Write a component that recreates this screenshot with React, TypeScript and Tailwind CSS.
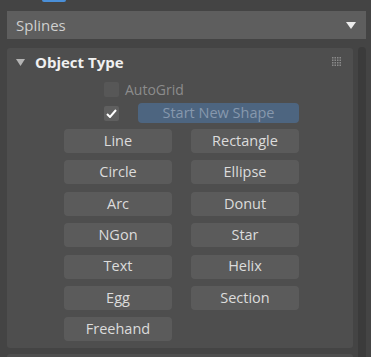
const SHAPES: string[] = [
  'Line',
  'Rectangle',
  'Circle',
  'Ellipse',
  'Arc',
  'Donut',
  'NGon',
  'Star',
  'Text',
  'Helix',
  'Egg',
  'Section',
  'Freehand',
];

function GripIcon() {
  const cells = [0, 1, 2, 3];
  return (
    <svg width="10" height="10" viewBox="0 0 10 10">
      {cells.map((r) =>
        cells.map((c) => (
          <rect key={`${r}-${c}`} x={c * 2.5} y={r * 2.5} width="1.5" height="1.5" fill="#8a8a8a" />
        )),
      )}
    </svg>
  );
}

function ShapeButton({ label }: { label: string }) {
  return (
    <button
      type="button"
      className="h-[24px] w-[108px] rounded-[4px] bg-[#5b5b5b] text-[14.5px] leading-none text-[#dcdcdc]"
    >
      {label}
    </button>
  );
}

export default function App() {
  return (
    <div
      className="h-[357px] w-[371px] overflow-hidden bg-[#444444]"
      style={{ fontFamily: '"Open Sans", "Noto Sans", sans-serif' }}
    >
      {/* cut-off tab above the list */}
      <div className="h-[11px]">
        <div className="ml-[42px] h-[2px] w-[24px] rounded-b-[2px] bg-[#4a8fd8]" />
      </div>

      {/* category dropdown */}
      <div className="ml-[7px] flex h-[28px] w-[359px] items-center justify-between bg-[#5e5e5e] pl-[9px] pr-[10px]">
        <span className="text-[15px] text-[#cfcfcf]">Splines</span>
        <svg width="10" height="7" viewBox="0 0 10 7">
          <path d="M0 0 H10 L5 7 Z" fill="#ececec" />
        </svg>
      </div>

      <div className="mt-[9px] flex h-[310px]">
        <div className="flex flex-col">
          {/* Object Type rollout */}
          <div className="ml-[7px] h-[301px] w-[346px] rounded-[3px] bg-[#4e4e4e]">
            <div className="flex h-[28px] items-center pl-[9px] pr-[11px]">
              <svg width="9" height="7" viewBox="0 0 9 7">
                <path d="M0 0 H9 L4.5 7 Z" fill="#b4b4b4" />
              </svg>
              <span className="ml-[10px] text-[15px] font-bold text-[#f0f0f0]">Object Type</span>
              <div className="ml-auto">
                <GripIcon />
              </div>
            </div>

            <div className="ml-[97px] mt-[6px] flex h-[15px] items-center">
              <div className="h-[15px] w-[15px] rounded-[2px] bg-[#575757]" />
              <span className="ml-[6px] text-[14px] leading-none text-[#8c8c8c]">AutoGrid</span>
            </div>

            <div className="ml-[97px] mt-[6px] flex h-[20px] items-center">
              <div className="flex h-[15px] w-[15px] items-center justify-center rounded-[2px] bg-[#5f5f5f]">
                <svg width="11" height="9" viewBox="0 0 11 9">
                  <path d="M1 5 L4 8 L10 1" fill="none" stroke="#ffffff" strokeWidth="2" />
                </svg>
              </div>
              <div className="ml-[19px] flex h-[20px] w-[161px] items-center justify-center rounded-[4px] bg-[#4d6580] text-[14.5px] leading-none text-[#8798ad]">
                Start New Shape
              </div>
            </div>

            <div className="ml-[57px] mt-[6px] grid w-[235px] grid-cols-[108px_108px] gap-x-[19px] gap-y-[7.4px]">
              {SHAPES.map((s) => (
                <ShapeButton key={s} label={s} />
              ))}
            </div>
          </div>
          {/* next rollout edge */}
          <div className="ml-[7px] mt-[6px] h-[4px] w-[346px] rounded-t-[3px] bg-[#4e4e4e]" />
        </div>

        {/* scrollbar */}
        <div className="ml-[5px] mt-[-1px] h-[320px] w-[8px] rounded-t-full bg-[#3b3b3b]" />
      </div>
    </div>
  );
}
